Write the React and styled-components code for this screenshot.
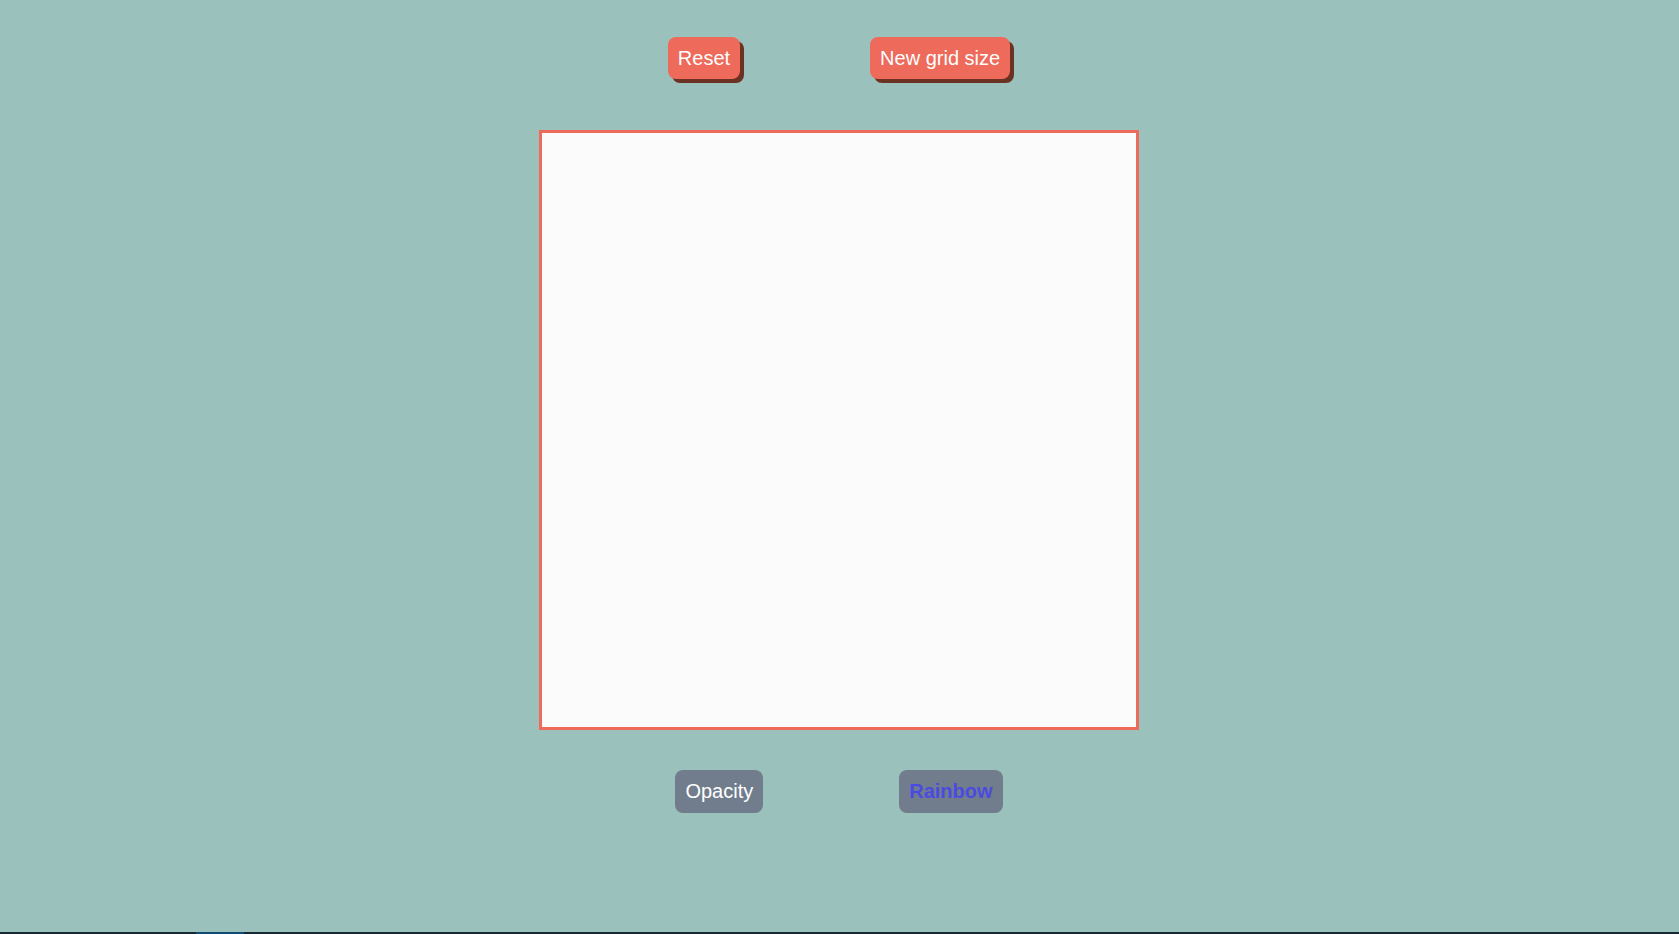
import React from "react";
import styled, { createGlobalStyle } from "styled-components";

const GlobalStyle = createGlobalStyle`
  html, body {
    margin: 0;
    padding: 0;
    background: #9bc1bd;
  }
  body {
    font-family: "Liberation Sans", Arial, sans-serif;
  }
`;

const Page = styled.div`
  min-height: 100vh;
  display: flex;
  flex-direction: column;
  box-sizing: border-box;
`;

const Main = styled.main`
  flex: 1;
  display: flex;
  flex-direction: column;
  align-items: center;
  padding-top: 37px;
  padding-right: 1px;
`;

const ButtonRow = styled.div`
  display: flex;
  justify-content: center;
  gap: ${(p) => p.$gap}px;
`;

const ActionButton = styled.button`
  font-family: "Liberation Sans", Arial, sans-serif;
  font-size: 20px;
  line-height: 22px;
  padding: 10px 10px;
  border: none;
  border-radius: 8px;
  background: #ee6a5b;
  color: #ffffff;
  box-shadow: 4px 4px 0 #6b3224;
  cursor: pointer;
`;

const ModeButton = styled.button`
  font-family: "Liberation Sans", Arial, sans-serif;
  font-size: 20px;
  line-height: 23px;
  padding: 10px 10px;
  border: none;
  border-radius: 8px;
  background: #717d8c;
  color: ${(p) => (p.$active ? "#4b4be0" : "#ffffff")};
  font-weight: ${(p) => (p.$active ? 700 : 400)};
  cursor: pointer;
`;

const Grid = styled.div`
  box-sizing: border-box;
  width: 600px;
  height: 600px;
  margin: 51px 0 40px;
  border: 3px solid #ee6a5b;
  background: #fbfbfb;
  display: grid;
  grid-template-columns: repeat(16, 1fr);
  grid-template-rows: repeat(16, 1fr);
`;

const Cell = styled.div`
  background: #fbfbfb;
`;

const Taskbar = styled.footer`
  height: 2px;
  background: #172a33;
  display: flex;
`;

const TaskItem = styled.div`
  margin-left: 196px;
  width: 48px;
  height: 100%;
  background: #0f4a73;
`;

export default function App() {
  const cells = Array.from({ length: 256 }, (_, i) => i);
  return (
    <>
      <GlobalStyle />
      <Page>
        <Main>
          <ButtonRow $gap={130}>
            <ActionButton>Reset</ActionButton>
            <ActionButton>New grid size</ActionButton>
          </ButtonRow>
          <Grid>
            {cells.map((i) => (
              <Cell key={i} />
            ))}
          </Grid>
          <ButtonRow $gap={136}>
            <ModeButton>Opacity</ModeButton>
            <ModeButton $active>Rainbow</ModeButton>
          </ButtonRow>
        </Main>
        <Taskbar>
          <TaskItem />
        </Taskbar>
      </Page>
    </>
  );
}
